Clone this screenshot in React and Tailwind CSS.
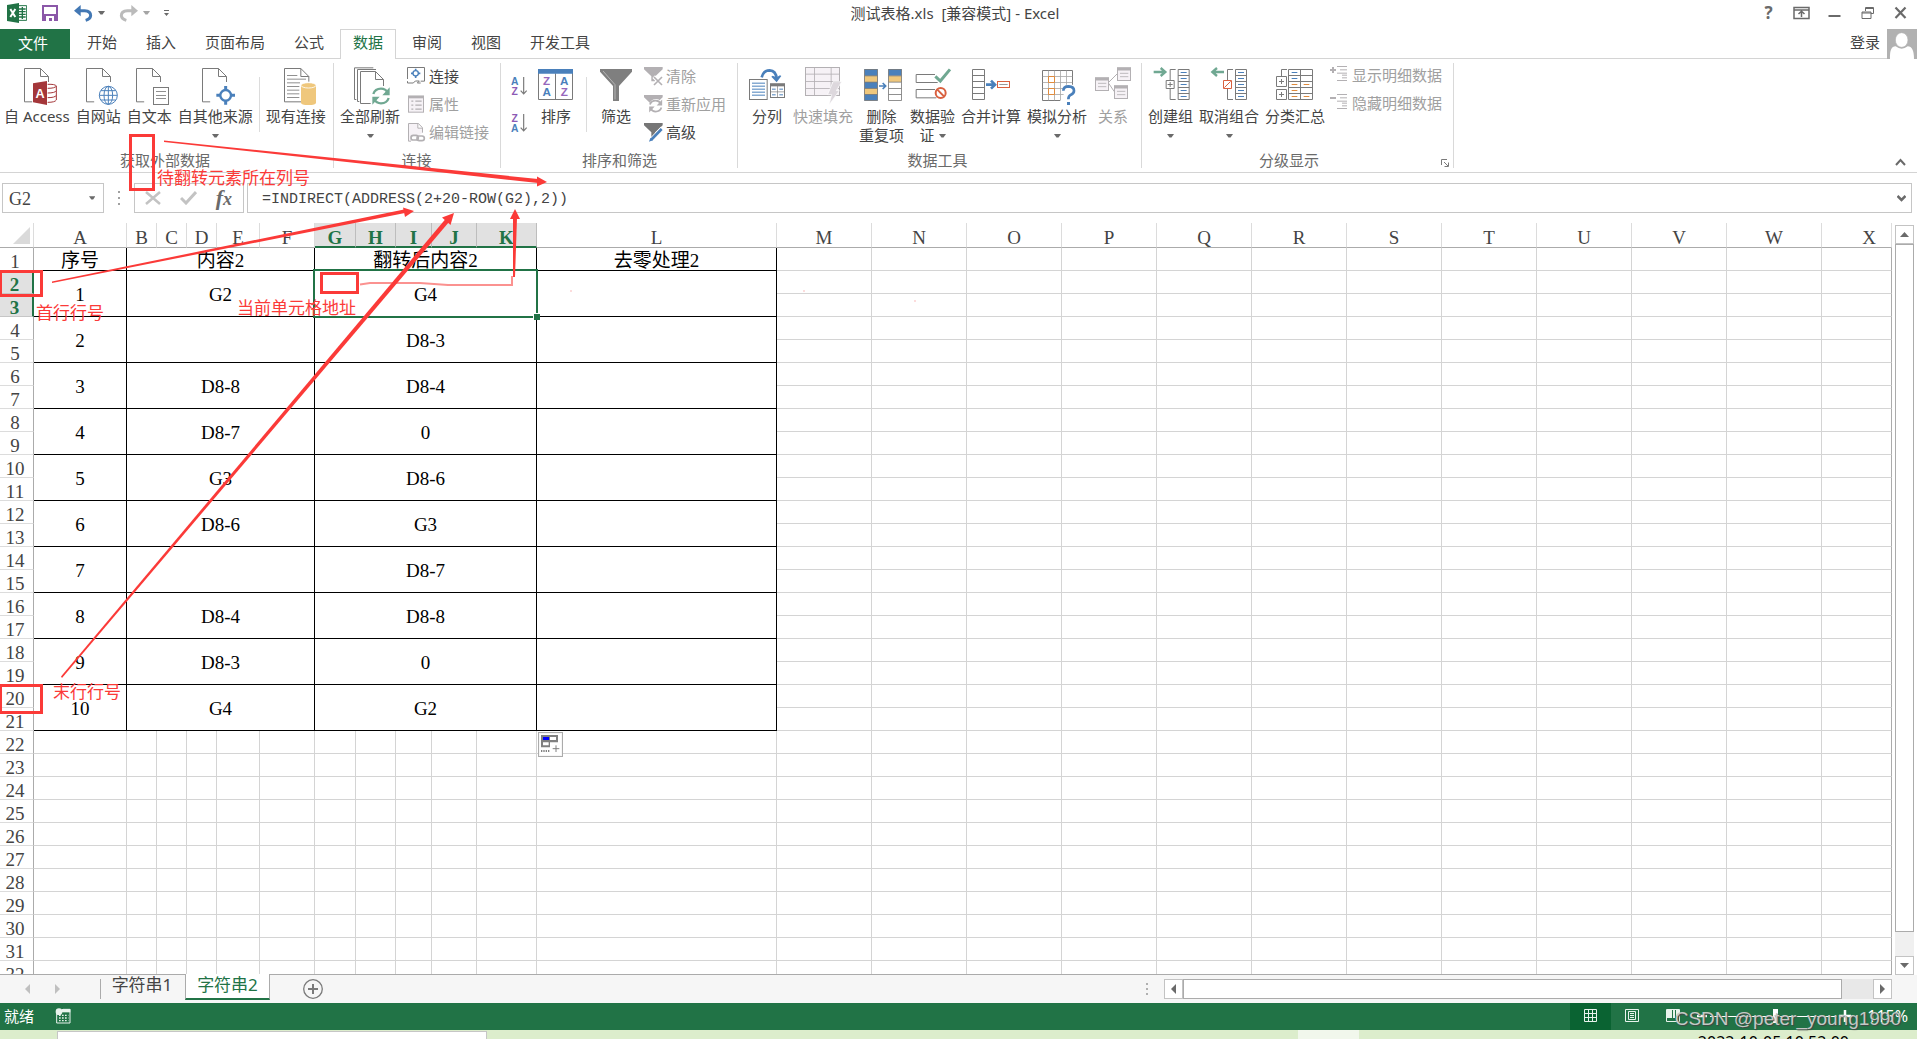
import React from "react";

const UI = "font-['Noto_Sans','Noto_Sans_CJK_SC',sans-serif]";
const SHEET = "font-['Liberation_Serif','Noto_Sans_CJK_SC',serif]";
const BLUE = "#4a80bb";
const GREY = "#7a7a7a";
const PALE = "#b3b0b3";
const GREEN = "#70a892";
const ORANGE = "#e08b3c";
const RED = "#d9603f";
const GOLD = "#efc77c";

function Art({ box, small, children }) {
  return (
    <svg
      viewBox={box}
      className={small ? "size-5 shrink-0" : "size-10 shrink-0"}
      fill="none"
      stroke={GREY}
      strokeWidth="3"
      aria-hidden="true"
    >
      {children}
    </svg>
  );
}

function Page({ x }) {
  return (
    <g transform={`translate(${x} 0)`}>
      <path d="M24.5 305.5H1.5V205.5H49.5L73.5 229.5V246M49.5 205.5V229.5H73.5" />
    </g>
  );
}

function Caret({ className = "" }) {
  return (
    <svg width="7" height="4" viewBox="0 0 7 4" className={className} aria-hidden="true">
      <path d="M0 0H7L4.500 3.500H2.500Z" fill="#6a6a6a" />
    </svg>
  );
}

const AccessIcon = () => (
  <Art box="54 198 120 120">
    <Page x={75} />
    <path d="M102 250L144 243V315L102 307Z" fill="#a4373a" stroke="none" />
    <text x="123" y="293" textAnchor="middle" fontSize="38" fontWeight="700" fill="#fff" stroke="none" fontFamily="Liberation Sans">A</text>
    <g stroke="#a4373a">
      <path d="M146 253Q168 252 172 258Q168 265 146 265" />
      <path d="M172 258V300Q168 307 146 307M172 272Q168 279 146 279M172 286Q168 293 146 293" />
    </g>
  </Art>
);
const WebIcon = () => (
  <Art box="240 198 120 120">
    <Page x={264} />
    <g stroke={BLUE}>
      <circle cx="331" cy="286" r="27" fill="#fff" />
      <ellipse cx="331" cy="286" rx="13" ry="27" />
      <path d="M331 259V313M304 286H358M309 272H353M309 300H353" />
    </g>
  </Art>
);
const TextIcon = () => (
  <Art box="390 198 120 120">
    <Page x={411} />
    <rect x="463.500" y="262.500" width="45" height="51" fill="#fff" />
    <path d="M471 274.500H501M471 286.500H501M471 295.500H501" strokeWidth="2.500" />
  </Art>
);
const OtherIcon = () => (
  <Art box="585 198 120 120">
    <Page x={606} />
    <circle cx="677" cy="286" r="26" fill="#fff" stroke="none" />
    <g stroke={BLUE}>
      <circle cx="677" cy="286" r="16" strokeWidth="7" />
      <path d="M677 258V270M677 302V314M649 286H661M693 286H705" strokeWidth="9" />
    </g>
  </Art>
);
const ExistingIcon = () => (
  <Art box="828 198 120 120">
    <path d="M903 305.500H853.500V205.500H902.500L926.500 229.500V245M902.500 205.500V229.500H926.500" />
    <path d="M861 226.500H892M861 237.500H918M861 248.500H900M861 259.500H898M861 270.500H898M861 281.500H898M861 292.500H898" strokeWidth="2.500" />
    <path d="M903 256V308Q903 315 925 315Q948 315 948 308V256Z" fill={GOLD} stroke="none" />
    <ellipse cx="925.500" cy="256" rx="22.500" ry="8" fill={GOLD} stroke="#fff" strokeWidth="2.500" />
  </Art>
);
const RefreshArrows = ({ x, y, s = 1, color }) => (
  <g transform={`translate(${x} ${y}) scale(${s})`} stroke={color} strokeWidth="7">
    <path d="M-23 -6Q-18 -22 0 -22Q14 -22 20 -10" />
    <path d="M23 6Q18 22 0 22Q-14 22 -20 10" />
    <path d="M26 -26V-2H4ZM-26 26V2H-4Z" fill={color} stroke="none" />
  </g>
);
const RefreshIcon = () => (
  <Art box="1050 198 120 120">
    <path d="M1069 298.500H1063.500V203.500H1120M1078 304.500H1072.500V208.500H1128" />
    <path d="M1112 310.500H1081.500V214.500H1126.500L1150.500 238.500V258M1126.500 214.500V238.500H1150.500" />
    <RefreshArrows x={1143} y={288} color={GREEN} />
  </Art>
);
const ConnIcon = () => (
  <Art small box="1218 198 60 60">
    <path d="M1222.500 237V202.500H1273.500V243.500H1262M1222.500 243.500V249H1240L1246 243H1258L1252 249H1262" />
    <circle cx="1247" cy="220" r="8" stroke={BLUE} strokeWidth="4" />
    <path d="M1247 206V212M1247 228V234M1233 220H1239M1255 220H1261" stroke={BLUE} strokeWidth="5" />
  </Art>
);
const PropIcon = () => (
  <Art small box="1218 282 60 60">
    <g stroke={PALE}>
      <rect x="1225.500" y="288.500" width="45" height="48" fill="#f6f2f6" />
      <path d="M1224 291H1272" strokeWidth="8" />
      <path d="M1246 303.500H1265M1246 315.500H1265M1246 327.500H1265M1234 303.500H1240M1234 315.500H1240M1234 327.500H1240" strokeWidth="4" />
    </g>
  </Art>
);
const LinkIcon = () => (
  <Art small box="1218 366 60 60">
    <g stroke={PALE}>
      <path d="M1233 423.500H1225.500V370.500H1255L1267.500 383V398M1253.500 370.500V384.500H1267.500" fill="#f6f2f6" />
      <rect x="1233" y="406" width="22" height="14" rx="7" strokeWidth="5" fill="#fff" />
      <rect x="1251" y="408" width="22" height="14" rx="7" strokeWidth="5" />
    </g>
  </Art>
);
const SortArrow = ({ up, down, y }) => (
  <Art small box={`567 ${y} 60 60`}>
    <g stroke="none" fontSize="31" fontWeight="700" fontFamily="Liberation Sans" textAnchor="middle">
      <text x="584" y={y + 28} fill={up === "A" ? BLUE : "#8d5ab5"}>{up}</text>
      <text x="584" y={y + 57} fill={down === "A" ? BLUE : "#8d5ab5"}>{down}</text>
    </g>
    <path d={`M611 ${y + 3}V${y + 53}M602 ${y + 44}L611 ${y + 54}L620 ${y + 44}`} strokeWidth="3.500" />
  </Art>
);
const SortIcon = () => (
  <Art box="648 198 120 120">
    <path d="M655.500 208.500H757.500V298.500H655.500ZM706.500 220V298" />
    <path d="M654 214H759" stroke={BLUE} strokeWidth="14" />
    <g stroke="none" fontSize="35" fontWeight="700" fontFamily="Liberation Sans" textAnchor="middle">
      <text x="680" y="255" fill="#9667bc">Z</text>
      <text x="680" y="289" fill={BLUE}>A</text>
      <text x="733" y="255" fill={BLUE}>A</text>
      <text x="733" y="289" fill="#9667bc">Z</text>
    </g>
  </Art>
);
const FilterIcon = () => (
  <Art box="825 198 120 120">
    <path d="M837 207H933V215L894 258V303H876V258L837 215Z" fill="#7f7f7f" stroke="none" />
    <path d="M846 213L882 254V298" stroke="#b5b5b5" />
  </Art>
);
const Funnel = ({ y, color }) => (
  <path d={`M972 ${y}H1028V${y + 7}L1006 ${y + 28}V${y + 43}H994V${y + 28}L972 ${y + 7}Z`} fill={color} stroke="none" />
);
const ClearIcon = () => (
  <Art small box="969 198 60 60">
    <Funnel y={201} color={PALE} />
    <path d="M1001 230L1027 256M1027 230L1001 256" stroke="#fff" strokeWidth="11" />
    <path d="M1002 231L1026 255M1026 231L1002 255" stroke={PALE} strokeWidth="5" />
  </Art>
);
const ReapplyIcon = () => (
  <Art small box="969 282 60 60">
    <Funnel y={285} color={PALE} />
    <circle cx="1008" cy="318" r="21" fill="#fff" stroke="none" />
    <RefreshArrows x={1007} y={318} s={0.75} color={PALE} />
  </Art>
);
const AdvancedIcon = () => (
  <Art small box="969 366 60 60">
    <Funnel y={369} color="#767676" />
    <path d="M990 424L1027 385" stroke="#fff" strokeWidth="13" />
    <path d="M993 420L1025 387" stroke={BLUE} strokeWidth="8" />
    <path d="M987 425L998 421L991 414Z" fill={BLUE} stroke="none" />
  </Art>
);
const ColumnsIcon = () => (
  <Art box="81 198 120 120">
    <path d="M125 232Q130 211 149 211Q168 212 170 236" stroke={BLUE} strokeWidth="8" />
    <path d="M154 230L170 247L184 228L180 226L170 232L158 227Z" fill={BLUE} stroke="none" />
    <rect x="88.500" y="238.500" width="53" height="60" />
    <path d="M96 249.500H135M96 258.500H135M96 267.500H135M96 276.500H135M96 285.500H135" stroke={BLUE} />
    <rect x="151.500" y="251.500" width="42" height="41" />
    <path d="M150 255H195" strokeWidth="8" />
    <path d="M172.500 258V292M151 275.500H193" strokeWidth="2" />
    <path d="M156 267.500H167M178 267.500H189M156 284.500H167M178 284.500H189" stroke={BLUE} />
  </Art>
);
const FlashIcon = () => (
  <Art box="252 198 120 120">
    <g stroke={PALE}>
      <rect x="259.500" y="202.500" width="102" height="84" fill="#f6f2f6" />
      <path d="M286.500 203V287M336.500 203V287M260 222.500H361M260 244.500H361M260 265.500H361" strokeWidth="2.500" />
    </g>
    <path d="M342 245H368L352 272H361L330 315L338 284H326Z" fill="#ddd8dd" stroke="#fff" strokeWidth="2" />
  </Art>
);
const DedupeIcon = () => (
  <Art box="423 198 120 120">
    <path d="M430 207H470V302H430Z" fill={BLUE} stroke="none" />
    <path d="M430 227H470V246H430ZM430 265H470V283H430ZM502 227H542V246H502Z" fill={GOLD} stroke="none" />
    <path d="M502 207H542V227H502Z" fill={BLUE} stroke="none" />
    <path d="M430.500 208.500H469.500V301.500H430.500ZM502.500 208.500H541.500V301.500H502.500ZM431 227.500H469M431 246.500H469M431 265.500H469M431 283.500H469M503 227.500H541M503 246.500H541M503 265.500H541M503 283.500H541" strokeWidth="2.500" />
    <path d="M474 258H493M485 249L494 258L485 267" stroke={BLUE} strokeWidth="5" />
  </Art>
);
const ValidateIcon = () => (
  <Art box="574 198 120 120">
    <path d="M640 223.500H583.500V247.500H648M640 268.500H583.500V293.500H644" />
    <path d="M641 229L656 243L685 208" stroke={GREEN} strokeWidth="9" />
    <circle cx="657" cy="279" r="15" stroke={RED} strokeWidth="6" fill="#fff" />
    <path d="M647 269L667 289" stroke={RED} strokeWidth="6" />
  </Art>
);
const MergeIcon = () => (
  <Art box="747 198 120 120">
    <path d="M751.500 208.500H787.500V298.500H751.500ZM751 226.500H788M751 244.500H788M751 262.500H788M751 280.500H788" />
    <path d="M792 254H816M807 242L819 254L807 266" stroke={BLUE} strokeWidth="8" />
    <rect x="826.500" y="244.500" width="36" height="18" stroke={RED} />
    <path d="M832 253.500H857" stroke="#999" />
  </Art>
);
const WhatIfIcon = () => (
  <Art box="942 198 120 120">
    <path d="M958.500 211.500H1048.500V301.500H958.500Z" />
    <path d="M976.500 212V301M994.500 212V301M1012.500 212V301M1030.500 212V301M959 229.500H1048M959 247.500H1048M959 265.500H1048M959 283.500H1048" stroke="#a9a9a9" strokeWidth="2.500" />
    <path d="M976.500 229.500H994.500V247.500H976.500ZM976.500 265.500H994.500V283.500H976.500Z" stroke={ORANGE} />
    <path d="M1018 254H1062V318H1012V300H1024Z" fill="#fff" stroke="none" />
    <path d="M1021 272Q1021 259 1037 259Q1053 260 1053 272Q1053 280 1044 284Q1036 288 1036 298" stroke={BLUE} strokeWidth="8" />
    <path d="M1032 306H1041V315H1032Z" fill={BLUE} stroke="none" />
  </Art>
);
const RelationIcon = () => (
  <Art box="1116 198 120 120">
    <g stroke={PALE}>
      {[[1123, 233], [1189, 203], [1180, 257]].map(([x, y]) => (
        <g key={x}>
          <rect x={x + 0.5} y={y + 0.5} width="39" height="38" fill="#f6f2f6" />
          <path d={`M${x - 1} ${y + 4}H${x + 41}`} strokeWidth="9" />
          <path d={`M${x + 8} ${y + 17}H${x + 33}M${x + 8} ${y + 27}H${x + 33}`} strokeWidth="2.500" />
        </g>
      ))}
      <path d="M1163 247L1188 222M1163 250L1180 275" />
    </g>
  </Art>
);
const OutlineTable = ({ x, w }) => (
  <path d={`M${x} 208.500H${x + w}V298.500H${x}ZM${x} 226.500H${x + w}M${x} 244.500H${x + w}M${x} 262.500H${x + w}M${x} 280.500H${x + w}`} />
);
const GroupIcon = () => (
  <Art box="61 198 120 120">
    <path d="M69 216H104M90 204L104 216L90 228" stroke={GREEN} strokeWidth="7" />
    <path d="M135 208.500H118.500V240M118.500 267V298.500H135" />
    <path d="M106.500 241.500H130.500V265.500H106.500ZM111 253.500H126M118.500 246V261" />
    <OutlineTable x={142.5} w={33} />
    <path d="M150 217.500H168M150 235.500H168M150 253.500H168M150 271.500H168M150 289.500H168" stroke={BLUE} />
  </Art>
);
const UngroupIcon = () => (
  <Art box="234 198 120 120">
    <path d="M279 216H244M258 204L244 216L258 228" stroke={GREEN} strokeWidth="7" />
    <path d="M306 208.500H289.500V240M289.500 267V298.500H306" />
    <path d="M277.500 241.500H301.500V265.500H277.500ZM280 263L299 244" stroke={RED} />
    <OutlineTable x={313.5} w={33} />
    <path d="M321 217.500H339M321 235.500H339M321 253.500H339M321 271.500H339M321 289.500H339" stroke={BLUE} />
  </Art>
);
const SubtotalIcon = () => (
  <Art box="429 198 120 120">
    <path d="M465 208.500H448.500V230" />
    <path d="M433.500 229.500H463.500V259.500H433.500ZM441 244.500H456M448.500 237V252M433.500 268.500H463.500V298.500H433.500ZM441 283.500H456M448.500 276V291" />
    <OutlineTable x={469.5} w={72} />
    <path d="M505.500 208V299" />
    <path d="M479 217.500H496M479 235.500H496" stroke={BLUE} />
    <path d="M479 253.500H496M515 253.500H532M479 271.500H496M479 289.500H496M515 289.500H532" stroke={ORANGE} />
  </Art>
);
const DetailIcon = ({ plus }) => (
  <Art small box="600 198 60 60">
    <g stroke={PALE}>
      <path d="M603 213H621" strokeWidth="6" />
      {plus && <path d="M612 204V222" strokeWidth="6" />}
      <path d="M624 202.500H654M633 212.500H654M624 222.500H654M639 228.500H654M639 236.500H654M624 244.500H654" />
    </g>
  </Art>
);

function Big({ icon, lines, caret, muted }) {
  return (
    <button
      type="button"
      className={`flex shrink-0 flex-col items-center whitespace-nowrap pt-[7px] text-[15px] leading-[19px] ${muted ? "text-[#a0a0a0]" : "text-[#444]"}`}
    >
      {icon}
      <span className="mt-px">{lines[0]}</span>
      {(lines[1] || caret) && (
        <span className="flex h-[19px] items-center gap-1">
          {lines[1]}
          {caret && <Caret />}
        </span>
      )}
    </button>
  );
}

function Small({ icon, label, muted }) {
  return (
    <button
      type="button"
      className={`flex h-7 items-center gap-[3px] whitespace-nowrap text-[15px] leading-5 ${muted ? "text-[#a0a0a0]" : "text-[#444]"}`}
    >
      {icon}
      {label}
    </button>
  );
}

const Rule = () => <div className="mt-[18px] h-[55px] w-px shrink-0 bg-[#dcdcdc]" />;

function Group({ title, className, children, launcher }) {
  return (
    <section className={`relative flex shrink-0 flex-col ${className}`} aria-label={title}>
      <div className="flex flex-1 gap-[6px]">{children}</div>
      <h2 className="mb-[2px] h-5 pr-2 text-center text-[15px] leading-5 text-[#6a6a6a]">{title}</h2>
      {launcher && (
        <button type="button" aria-label="分级显示设置" className="absolute bottom-[5px] right-[5px]">
          <svg width="8" height="8" viewBox="0 0 8 8" fill="none" stroke={GREY}>
            <path d="M0.500 6V0.500H6M3 3L7 7M7.500 3.500V7.500H3.500" />
          </svg>
        </button>
      )}
      <div className="absolute bottom-1 right-0 top-1 w-px bg-[#d9d9d9]" />
    </section>
  );
}

function TitleBar() {
  return (
    <header className="grid h-[29px] grid-cols-[1fr_auto_1fr] items-start">
      <div className="flex h-[26px] items-center pl-[7px]">
        <svg width="20" height="20" viewBox="0 0 60 60" aria-hidden="true">
          <path d="M34 8H59V52H34" fill="#fff" stroke="#217346" strokeWidth="3" />
          <path d="M36 18H56M36 26H56M36 34H56M36 42H56M46 12V48" stroke="#217346" strokeWidth="4" />
          <path d="M0 6L36 0V60L0 54Z" fill="#217346" />
          <path d="M10 18L25 42M25 18L10 42" stroke="#fff" strokeWidth="6" />
        </svg>
        <button type="button" aria-label="保存" className="ml-[15px]">
          <svg width="16" height="16" viewBox="0 0 16 16">
            <path d="M0 0H16V16H0Z" fill="#8b57a8" />
            <path d="M2 2H14V9H2ZM4 11H12V16H10V13H7V16H4Z" fill="#fff" />
          </svg>
        </button>
        <button type="button" aria-label="撤消" className="ml-4 flex items-center gap-[5px]">
          <svg width="19" height="17" viewBox="0 0 57 51" fill="none">
            <path d="M8 17H32Q50 18 50 32Q49 42 35 46" stroke="#4378b4" strokeWidth="9" />
            <path d="M0 17L20 0V34Z" fill="#4378b4" />
          </svg>
          <Caret />
        </button>
        <button type="button" aria-label="恢复" className="ml-[14px] flex items-center gap-[5px] opacity-60">
          <svg width="19" height="17" viewBox="0 0 57 51" fill="none">
            <path d="M49 17H25Q7 18 7 32Q8 42 22 46" stroke="#8f8f8f" strokeWidth="9" />
            <path d="M57 17L37 0V34Z" fill="#8f8f8f" />
          </svg>
          <Caret />
        </button>
        <button type="button" aria-label="自定义快速访问工具栏" className="ml-[14px]">
          <svg width="5" height="7" viewBox="0 0 5 7">
            <path d="M0 0H5V1H0ZM0 3H5L2.500 6Z" fill="#6a6a6a" />
          </svg>
        </button>
      </div>
      <h1 className="whitespace-pre pr-[7px] text-[15px] leading-[26px] text-[#444]">测试表格.xls  [兼容模式] - Excel</h1>
      <div className="flex h-[26px] justify-end text-[#6a6a6a]">
        <button type="button" className="w-[33px] text-[17px] font-bold leading-[26px]" aria-label="帮助">?</button>
        {[
          ["功能区显示选项", <path key="p" d="M1 2.500H16V13.500H1ZM1 5H16M8.500 12V6.500M5.500 9L8.500 6.200L11.500 9" strokeWidth="1.500" />],
          ["最小化", <path key="p" d="M2.500 11H14.500" strokeWidth="2" />],
          ["还原", <path key="p" d="M3 7H12V13.500H3ZM3 8H12M6.500 6V2.500H14.500V8.500H12M6.500 3.500H14.500" />],
          ["关闭", <path key="p" d="M3.500 2.500L13.500 13M13.500 2.500L3.500 13" strokeWidth="2.200" />],
        ].map(([name, art]) => (
          <button key={name} type="button" aria-label={name} className="flex w-[33px] items-center justify-center">
            <svg width="17" height="16" viewBox="0 0 17 16" fill="none" stroke="#6a6a6a" strokeWidth="1">{art}</svg>
          </button>
        ))}
      </div>
    </header>
  );
}

const TABS = ["开始", "插入", "页面布局", "公式", "数据", "审阅", "视图", "开发工具"];

function Tabs() {
  return (
    <nav className="relative flex h-[30px] text-[15px]">
      <div className="absolute inset-x-0 bottom-0 h-px bg-[#d4d4d4]" />
      <button type="button" className="relative w-[70px] bg-[#217346] pb-0.5 pr-1 text-white">文件</button>
      <div className="relative ml-1 flex gap-[3px]">
        {TABS.map((t) => (
          <button
            key={t}
            type="button"
            className={
              t === "数据"
                ? "border border-b-0 border-[#d4d4d4] bg-white px-3 pb-1 text-[#217346]"
                : "border border-b-0 border-transparent px-3 pb-1 text-[#444]"
            }
          >
            {t}
          </button>
        ))}
      </div>
      <div className="relative ml-auto flex items-center gap-[7px]">
        <button type="button" className="pb-1 text-[#444]">登录</button>
        <svg width="30" height="30" viewBox="0 0 90 90" aria-hidden="true">
          <path d="M0 0H90V90H0Z" fill="#b1b1b1" />
          <path d="M9 90Q7 52 26 52Q44 66 62 52Q81 52 81 90Z" fill="#fff" />
          <ellipse cx="44" cy="33" rx="19" ry="22" fill="#fff" stroke="#b1b1b1" strokeWidth="2" />
        </svg>
      </div>
    </nav>
  );
}

function Ribbon() {
  return (
    <div className="relative flex h-[114px] border-b border-[#d4d4d4]">
      <Group title="获取外部数据" className="w-[334px] pl-1">
        <Big icon={<AccessIcon />} lines={["自 Access"]} />
        <Big icon={<WebIcon />} lines={["自网站"]} />
        <Big icon={<TextIcon />} lines={["自文本"]} />
        <Big icon={<OtherIcon />} lines={["自其他来源"]} caret />
        <Rule />
        <Big icon={<ExistingIcon />} lines={["现有连接"]} />
      </Group>
      <Group title="连接" className="w-[167px] pl-[6px]">
        <Big icon={<RefreshIcon />} lines={["全部刷新"]} caret />
        <div className="flex flex-col items-start pt-[3px]">
          <Small icon={<ConnIcon />} label="连接" />
          <Small icon={<PropIcon />} label="属性" muted />
          <Small icon={<LinkIcon />} label="编辑链接" muted />
        </div>
      </Group>
      <Group title="排序和筛选" className="w-[237px] pl-2">
        <div className="flex w-5 flex-col gap-[17px] pt-[17px]">
          <button type="button" aria-label="升序"><SortArrow up="A" down="Z" y={228} /></button>
          <button type="button" aria-label="降序"><SortArrow up="Z" down="A" y={228} /></button>
        </div>
        <div className="pl-px pr-1"><Big icon={<SortIcon />} lines={["排序"]} /></div>
        <Rule />
        <div className="pl-[3px] pr-px"><Big icon={<FilterIcon />} lines={["筛选"]} /></div>
        <div className="flex flex-col items-start pt-[3px]">
          <Small icon={<ClearIcon />} label="清除" muted />
          <Small icon={<ReapplyIcon />} label="重新应用" muted />
          <Small icon={<AdvancedIcon />} label="高级" />
        </div>
      </Group>
      <Group title="数据工具" className="w-[404px] pl-[9px] [&>h2]:pr-[14px]">
        <Big icon={<ColumnsIcon />} lines={["分列"]} />
        <Big icon={<FlashIcon />} lines={["快速填充"]} muted />
        <Big icon={<DedupeIcon />} lines={["删除", "重复项"]} />
        <Big icon={<ValidateIcon />} lines={["数据验", "证"]} caret />
        <Big icon={<MergeIcon />} lines={["合并计算"]} />
        <Big icon={<WhatIfIcon />} lines={["模拟分析"]} caret />
        <Big icon={<RelationIcon />} lines={["关系"]} muted />
      </Group>
      <Group title="分级显示" className="w-[312px] pl-[6px] [&>h2]:pr-6" launcher>
        <Big icon={<GroupIcon />} lines={["创建组"]} caret />
        <Big icon={<UngroupIcon />} lines={["取消组合"]} caret />
        <Big icon={<SubtotalIcon />} lines={["分类汇总"]} />
        <div className="-ml-0.5 flex flex-col items-start pt-0.5">
          <Small icon={<DetailIcon plus />} label="显示明细数据" muted />
          <Small icon={<DetailIcon />} label="隐藏明细数据" muted />
        </div>
      </Group>
      <button type="button" aria-label="折叠功能区" className="absolute bottom-[6px] right-[11px]">
        <svg width="11" height="8" viewBox="0 0 11 8" fill="none" stroke="#6a6a6a" strokeWidth="2">
          <path d="M1 7L5.500 2L10 7" />
        </svg>
      </button>
    </div>
  );
}

function FormulaBar() {
  return (
    <div className="flex h-[50px] items-center pl-[2px] pr-[5px]">
      <div className="flex h-[30px] w-[102px] items-center border border-[#c6c6c6] pr-2">
        <input aria-label="名称框" defaultValue="G2" className={`w-full min-w-0 pl-[6px] pt-0.5 text-[18px] text-[#444] outline-none ${SHEET}`} />
        <Caret />
      </div>
      <div className="ml-[14px] flex w-[3px] flex-col gap-1">
        <i className="size-[2px] bg-[#a0a0a0]" />
        <i className="size-[2px] bg-[#a0a0a0]" />
        <i className="size-[2px] bg-[#a0a0a0]" />
      </div>
      <div className="ml-[13px] flex h-[30px] w-[110px] items-center justify-between border border-[#c6c6c6] pl-[10px] pr-[11px]">
        <button type="button" aria-label="取消">
          <svg width="16" height="14" viewBox="0 0 16 14" stroke="#c3c3c3" strokeWidth="2.500"><path d="M1 1L15 13M15 1L1 13" /></svg>
        </button>
        <button type="button" aria-label="输入">
          <svg width="17" height="14" viewBox="0 0 17 14" fill="none" stroke="#c3c3c3" strokeWidth="3"><path d="M1 7L6 12L16 1" /></svg>
        </button>
        <button type="button" aria-label="插入函数" className="font-['Liberation_Serif',serif] text-[22px] font-bold italic leading-6 text-[#6a6a6a]">
          f<span className="text-[18px]">x</span>
        </button>
      </div>
      <div className="ml-[3px] flex h-[30px] flex-1 items-center border border-[#c6c6c6] pr-[5px]">
        <input
          aria-label="编辑栏"
          defaultValue="=INDIRECT(ADDRESS(2+20-ROW(G2),2))"
          className="min-w-0 flex-1 pl-[14px] pt-1 font-['Liberation_Mono',monospace] text-[15px] text-[#444] outline-none"
        />
        <svg width="9" height="7" viewBox="0 0 9 7" fill="none" stroke="#6a6a6a" strokeWidth="2.500" aria-hidden="true">
          <path d="M0.500 1L4.500 5L8.500 1" />
        </svg>
      </div>
    </div>
  );
}

const COLS = [
  ["A", "w-[93px]"], ["B", "w-[30px]"], ["C", "w-[30px]"], ["D", "w-[30px]"], ["E", "w-[43px]"], ["F", "w-[55px]"],
  ["G", "w-[41px]"], ["H", "w-[40px]"], ["I", "w-[36px]"], ["J", "w-[45px]"], ["K", "w-[60px]"], ["L", "w-[240px]"],
  ["M", "w-[95px]"], ["N", "w-[95px]"], ["O", "w-[95px]"], ["P", "w-[95px]"], ["Q", "w-[95px]"], ["R", "w-[95px]"],
  ["S", "w-[95px]"], ["T", "w-[95px]"], ["U", "w-[95px]"], ["V", "w-[95px]"], ["W", "w-[95px]"], ["X", ""],
];
const DATA = [
  ["G2", "G4"], ["", "D8-3"], ["D8-8", "D8-4"], ["D8-7", "0"], ["G3", "D8-6"],
  ["D8-6", "G3"], ["", "D8-7"], ["D8-4", "D8-8"], ["D8-3", "0"], ["G4", "G2"],
];
const CELL = "border-b border-r border-black p-0 pt-[3px] text-center align-middle";

function Empty({ from }) {
  return COLS.slice(from).map(([c]) => (
    <td key={c} className={`border-b border-r border-b-[#d4d4d4] p-0 ${c === "X" ? "border-r-[#ababab]" : "border-r-[#d4d4d4]"}`} />
  ));
}

function RowHead({ n }) {
  const on = n === 2 || n === 3;
  return (
    <th
      scope="row"
      className={`h-[23px] p-0 pr-[3px] pt-[6px] ${
        on
          ? "border-b border-r-2 border-b-[#c6c6c6] border-r-[#217346] bg-[#e1e1e1] font-bold text-[#217346]"
          : "border-b border-r border-b-[#dcdcdc] border-r-[#ababab] font-normal text-[#444]"
      }`}
    >
      {n}
    </th>
  );
}

function SheetRow({ n }) {
  const rec = n > 1 && n < 22 ? DATA[(n - 2) / 2] : null;
  const inside = n < 22;
  return (
    <tr className="h-[23px]">
      <RowHead n={n} />
      {n === 1 && (
        <>
          <td className={CELL}>序号</td>
          <td className={CELL} colSpan={5}>内容2</td>
          <td className={CELL} colSpan={5}>翻转后内容2</td>
          <td className={CELL}>去零处理2</td>
        </>
      )}
      {rec && (
        <>
          <td className={CELL} rowSpan={2}>{n / 2}</td>
          <td className={CELL} rowSpan={2} colSpan={5}>{rec[0]}</td>
          <td className={`${CELL} relative`} rowSpan={2} colSpan={5}>
            {rec[1]}
            {n === 2 && (
              <span className="absolute -inset-[2px] z-10 border-2 border-[#217346]">
                <span className="absolute -bottom-1 -right-1 size-[7px] border-l border-t border-white bg-[#217346]" />
              </span>
            )}
          </td>
          <td className={CELL} rowSpan={2} />
        </>
      )}
      <Empty from={inside ? 12 : 0} />
    </tr>
  );
}

function Sheet() {
  return (
    <div className="flex min-h-0 flex-1">
      <div className="min-w-0 flex-1 overflow-hidden border-b border-[#ababab]">
        <table className={`w-full table-fixed border-separate border-spacing-0 text-[19px] leading-4 text-black ${SHEET}`}>
          <colgroup>
            <col className="w-[34px]" />
            {COLS.map(([c, w]) => <col key={c} className={w} />)}
          </colgroup>
          <thead>
            <tr className="h-[25px]">
              <th className="border-b border-r border-b-[#ababab] border-r-[#dcdcdc] p-0 pb-[3px] pr-[3px] align-bottom">
                <svg width="17" height="17" viewBox="0 0 17 17" className="ml-auto" aria-hidden="true"><path d="M17 0V17H0Z" fill="#dadada" /></svg>
              </th>
              {COLS.map(([c]) => (
                <th
                  key={c}
                  scope="col"
                  className={`h-[25px] border-r p-0 ${c === "X" ? "pl-[25px]" : ""} ${
                    c >= "G" && c <= "K"
                      ? "border-b-2 border-b-[#217346] border-r-[#bdbdbd] bg-[#e1e1e1] pt-[6px] font-bold text-[#217346]"
                      : "border-b border-b-[#ababab] border-r-[#dcdcdc] pt-[5px] font-normal text-[#444]"
                  }`}
                >
                  {c}
                </th>
              ))}
            </tr>
          </thead>
          <tbody>
            {Array.from({ length: 32 }, (_, i) => <SheetRow key={i} n={i + 1} />)}
          </tbody>
        </table>
      </div>
      <div className="mx-[3px] mt-[2px] flex w-[19px] flex-col bg-[#f0f0f0]">
        <button type="button" aria-label="向上滚动" className="flex h-[19px] items-center justify-center border border-[#c3c3c3] bg-white">
          <svg width="9" height="5" viewBox="0 0 9 5"><path d="M4.500 0L9 5H0Z" fill="#6a6a6a" /></svg>
        </button>
        <div className="mb-6 flex-1 border border-[#ababab] bg-white" />
        <button type="button" aria-label="向下滚动" className="flex h-[19px] items-center justify-center border border-[#c3c3c3] bg-white">
          <svg width="9" height="5" viewBox="0 0 9 5"><path d="M4.500 5L9 0H0Z" fill="#6a6a6a" /></svg>
        </button>
      </div>
    </div>
  );
}

const Tri = ({ left, color }) => (
  <svg width="5" height="10" viewBox="0 0 5 10" aria-hidden="true">
    <path d={left ? "M5 0V10L0 5Z" : "M0 0V10L5 5Z"} fill={color} />
  </svg>
);

function SheetTabs() {
  return (
    <div className="flex h-7 bg-[#f6f6f6] text-[17px] leading-5">
      <div className="flex w-[100px] items-center gap-[25px] pl-[25px]">
        <button type="button" aria-label="上一工作表"><Tri left color="#c0c0c0" /></button>
        <button type="button" aria-label="下一工作表"><Tri color="#c0c0c0" /></button>
      </div>
      <div className="mt-1 h-5 w-px bg-[#ababab]" />
      <button type="button" className="mb-[3px] w-[84px] pb-[5px] pr-[2px] text-[#444]">字符串1</button>
      <button type="button" className="-mt-px mb-[3px] w-[85px] border-x border-b-2 border-x-[#ababab] border-b-[#217346] bg-white pb-[3px] text-[#217346]">字符串2</button>
      <button type="button" aria-label="新工作表" className="ml-[33px] mt-1 size-5">
        <svg width="20" height="20" viewBox="0 0 20 20" fill="none" stroke="#7a7a7a">
          <circle cx="10" cy="10" r="9.300" strokeWidth="1.300" />
          <path d="M10 5V15M5 10H15" strokeWidth="2" />
        </svg>
      </button>
      <div className="ml-auto mr-4 flex flex-col justify-center gap-[3px]">
        <i className="size-[2px] bg-[#b0b0b0]" />
        <i className="size-[2px] bg-[#b0b0b0]" />
        <i className="size-[2px] bg-[#b0b0b0]" />
      </div>
      <div className="mr-[25px] mt-1 flex h-5 w-[38%] bg-[#e8e8e8]">
        <button type="button" aria-label="向左滚动" className="flex w-[19px] items-center justify-center border border-[#c3c3c3] bg-white"><Tri left color="#6a6a6a" /></button>
        <div className="mr-[31px] flex-1 border border-[#ababab] bg-white" />
        <button type="button" aria-label="向右滚动" className="flex w-[19px] items-center justify-center border border-[#c3c3c3] bg-white"><Tri color="#6a6a6a" /></button>
      </div>
    </div>
  );
}

function StatusBar() {
  return (
    <footer className="relative flex h-[27px] items-center bg-[#217346] text-[15px] leading-5 text-white">
      <span className="pb-0.5 pl-1">就绪</span>
      <svg width="16" height="16" viewBox="0 0 48 48" className="mb-0.5 ml-[21px]" aria-hidden="true">
        <path d="M5 14V45H45V4H24" fill="none" stroke="#e8f3ec" strokeWidth="3" />
        <path d="M20 3H46V13H20Z" fill="#e8f3ec" />
        <circle cx="12" cy="11" r="10" fill="#e8f3ec" />
        <path d="M12 22H40M12 30H40M12 38H40" stroke="#e8f3ec" strokeWidth="4" strokeDasharray="5 4" />
      </svg>
      <div className="ml-auto flex h-full items-center">
        <button type="button" aria-label="普通" className="flex h-full w-[41px] items-center justify-center bg-[#0a6332] pb-0.5">
          <svg width="13" height="13" viewBox="0 0 13 13" fill="none" stroke="#e8f3ec"><path d="M0.500 0.500H12.500V12.500H0.500ZM4.500 0V13M8.500 0V13M0 4.500H13M0 8.500H13" /></svg>
        </button>
        <button type="button" aria-label="页面布局" className="flex h-full w-[41px] items-center justify-center pb-0.5">
          <svg width="14" height="13" viewBox="0 0 14 13" fill="none" stroke="#e8f3ec"><path d="M0.500 0.500H13.500V12.500H0.500ZM3.500 2.500H10.500V10.500H3.500ZM5 4.500H9M5 6.500H9M5 8.500H9" /></svg>
        </button>
        <button type="button" aria-label="分页预览" className="flex h-full w-[41px] items-center justify-center pb-0.5">
          <svg width="14" height="13" viewBox="0 0 14 13" fill="none" stroke="#e8f3ec"><path d="M0.500 0.500H13.500V12.500H0.500Z" /><path d="M1 1H6V9H1ZM7 1H9V9H7ZM10 1H13V7H10Z" fill="#e8f3ec" stroke="none" /></svg>
        </button>
        <svg width="156" height="15" viewBox="0 0 156 15" className="ml-1" stroke="#fff" aria-hidden="true">
          <path d="M0 7H10M142 7H154M148 1V13" strokeWidth="2.500" />
          <path d="M13 7.500H140" />
          <path d="M78.500 0V14" strokeWidth="5" />
        </svg>
        <span className="w-[64px] pb-0.5 pr-[9px] text-right text-[16px]">115%</span>
      </div>
      <span className="absolute right-4 top-1 whitespace-nowrap font-['Liberation_Sans',sans-serif] text-[19px] leading-6 text-[#c3c9c5] [text-shadow:1px_1px_1px_#444]">
        CSDN @peter_young1990
      </span>
    </footer>
  );
}

function Taskbar() {
  return (
    <div className="flex h-[9px] overflow-hidden bg-[#dcedcc]">
      <div className="ml-[57px] mt-px w-[430px] border-x border-t border-[#c6c6c6] bg-white" />
      <div className="ml-auto w-[61px] bg-[#f1f7ec]" />
      <time className="ml-[339px] mr-[68px] whitespace-nowrap pt-[2px] text-[16px] leading-5 text-black">2022-10-05 10:52:00</time>
    </div>
  );
}

const NOTES = [
  ["待翻转元素所在列号", "left-[157px] top-[167px]"],
  ["首行行号", "left-[36px] top-[302px]"],
  ["当前单元格地址", "left-[237px] top-[297px]"],
  ["末行行号", "left-[53px] top-[681px]"],
];

function Annotations() {
  return (
    <div className="pointer-events-none absolute inset-0 z-20 overflow-hidden">
      <svg className="size-full" aria-hidden="true">
        <g fill="none" stroke="#fb3a38" strokeWidth="3">
          <rect x="130.500" y="135.500" width="23" height="54" />
          <rect x="0.500" y="271.500" width="41" height="24" />
          <rect x="321.500" y="273.500" width="36" height="19" />
          <rect x="0.500" y="685.500" width="41" height="27" />
        </g>
        <path d="M360 284.500L370 283H420L448 285H512V276" fill="none" stroke="#fb9290" strokeWidth="2" />
        <g fill="#fb3a38">
          <path d="M164 140.500L538 179V183L164 142Z" />
          <path d="M537 176.500L547 182L537 186.500Z" />
          <path d="M52 281.500L404 209.500L405 213L52 283Z" />
          <path d="M403 207.500L414 211L405 217Z" />
          <path d="M61 676.500L445.500 219L449 222L62 678Z" />
          <path d="M442 217.500L454 213L450.500 225Z" />
          <path d="M513 277L513 218H517L515 277Z" />
          <path d="M510 219L515 209L520 219Z" />
        </g>
        <g fill="#fcdcdc">
          <rect x="570" y="290" width="2" height="2" />
          <rect x="803" y="290" width="2" height="2" />
          <rect x="914" y="300" width="2" height="2" />
        </g>
      </svg>
      {NOTES.map(([text, place]) => (
        <span key={text} className={`absolute whitespace-nowrap text-[17px] leading-[22px] text-[#fb3a38] ${place}`}>{text}</span>
      ))}
      <svg width="25" height="25" viewBox="0 0 75 75" className="absolute left-[538px] top-[732px]" aria-hidden="true">
        <rect x="1.500" y="1.500" width="72" height="72" fill="#f6f6f6" stroke="#ababab" strokeWidth="3" />
        <path d="M6 6H69V69H6Z" fill="#fff" />
        <path d="M9 9H60V31H36V46H9Z" fill="#808080" />
        <path d="M36 15H54V24H36ZM15 31H32V40H15Z" fill="#fff" />
        <path d="M15 15H33V24H15Z" fill="#00f" />
        <path d="M9 57H36" stroke="#808080" strokeWidth="6" strokeDasharray="4 3" />
        <path d="M44 50H64M54 40V60" stroke="#808080" strokeWidth="3" />
      </svg>
    </div>
  );
}

export default function App() {
  return (
    <main className={`relative flex h-screen flex-col overflow-hidden bg-white ${UI}`}>
      <TitleBar />
      <Tabs />
      <Ribbon />
      <FormulaBar />
      <Sheet />
      <SheetTabs />
      <StatusBar />
      <Taskbar />
      <Annotations />
    </main>
  );
}
